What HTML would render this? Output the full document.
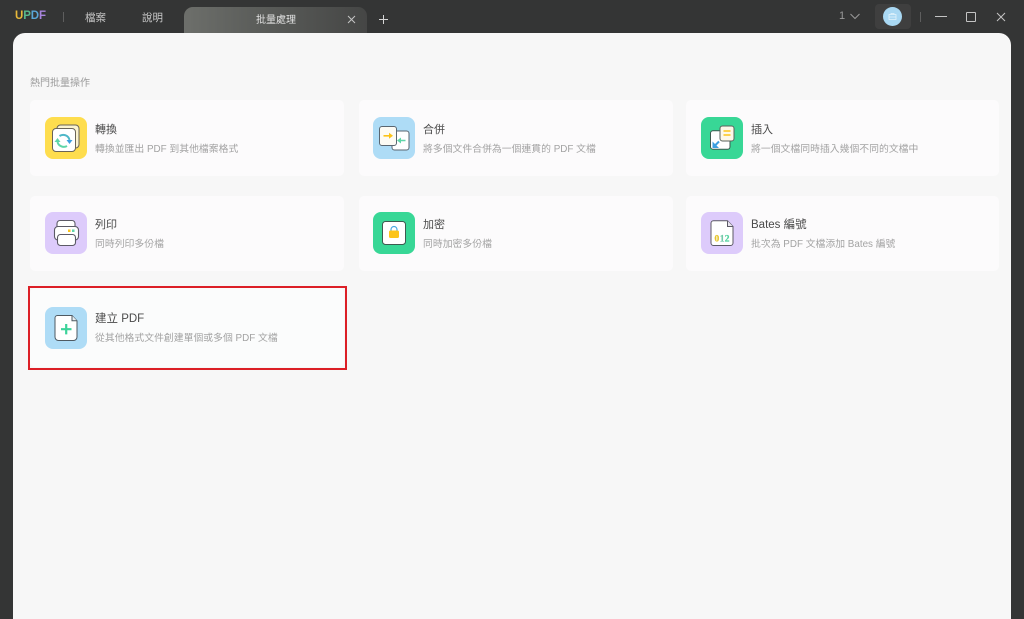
<!DOCTYPE html>
<html lang="zh-Hant">
<head>
<meta charset="utf-8">
<title>UPDF</title>
<style>
html,body{margin:0;padding:0;width:1024px;height:619px;overflow:hidden;background:#343535;}
body{position:relative;font-family:"Liberation Sans","Noto Sans CJK TC",sans-serif;}
#w{position:absolute;left:0;top:0;width:1024px;height:619px;overflow:hidden;background:#343535;filter:blur(.35px);}
.a{position:absolute;white-space:nowrap;}
.panel{position:absolute;left:13px;top:33px;width:998px;height:590px;background:#f7f7f7;border-radius:12px 12px 0 0;}
.tab{position:absolute;left:184px;top:7px;width:183px;height:28px;border-radius:9px 9px 0 0;background:linear-gradient(90deg,#6d6f6b 0%,#5d5f5c 35%,#454645 100%);}
.card{position:absolute;width:314px;height:76px;background:#fcfbfc;border-radius:5px;}
.ic{position:absolute;width:42px;height:42px;border-radius:8px;overflow:hidden;}
.ic svg{display:block;}
.t{position:absolute;font-size:11px;line-height:14px;color:#4a4a4a;white-space:nowrap;}
.s{position:absolute;font-size:9.85px;line-height:14px;color:#a3a3a3;white-space:nowrap;}
.red{position:absolute;left:28px;top:286px;width:315px;height:80px;border:2px solid #dc1f26;}
</style>
</head>
<body>
<div id="w">
<div class="a" style="left:15px;top:9px;font-size:11.5px;line-height:15px;font-weight:bold;letter-spacing:-.1px;"><span style="color:#e8b93a">U</span><span style="color:#58b88c">P</span><span style="color:#5aa5d8">D</span><span style="color:#a884dc">F</span></div>
<div class="a" style="left:63px;top:12px;width:1px;height:10px;background:#5e5e5e;"></div>
<div class="a" style="left:85px;top:11px;font-size:10.5px;line-height:15px;color:#c9c9c9;">檔案</div>
<div class="a" style="left:142px;top:11px;font-size:10.5px;line-height:15px;color:#c9c9c9;">說明</div>
<div class="tab"></div>
<div class="a" style="left:256px;top:13px;font-size:10px;line-height:15px;color:#e2e2e2;">批量處理</div>
<svg class="a" style="left:347px;top:15px" width="9" height="9" viewBox="0 0 9 9"><path d="M1 1L8 8M8 1L1 8" stroke="#c4c4c4" stroke-width="1" fill="none"/></svg>
<svg class="a" style="left:378px;top:14px" width="11" height="11" viewBox="0 0 11 11"><path d="M5.500 1V10M1 5.500H10" stroke="#d6d6d6" stroke-width="1" fill="none"/></svg>

<div class="a" style="left:839px;top:9px;font-size:11px;line-height:15px;color:#9a9a9a;">1</div>
<svg class="a" style="left:850px;top:13px" width="10" height="7" viewBox="0 0 10 7"><path d="M.5 1L5 5.500L9.500 1" stroke="#9a9a9a" stroke-width="1" fill="none"/></svg>
<div class="a" style="left:875px;top:4px;width:36px;height:25px;background:#3f3f3f;border-radius:4px;"></div>
<div class="a" style="left:883px;top:7px;width:19px;height:19px;border-radius:50%;background:#a9d8f3;"></div>
<svg class="a" style="left:888px;top:12px" width="9" height="9" viewBox="0 0 9 9"><path d="M1 2.500H8V7.500H1ZM1 5H8M3 2.500V1.500H6V2.500" stroke="#e3f3fc" stroke-width=".8" fill="none"/></svg>
<div class="a" style="left:920px;top:12px;width:1px;height:10px;background:#5e5e5e;"></div>
<div class="a" style="left:935px;top:16px;width:12px;height:1px;background:#c4c4c4;"></div>
<div class="a" style="left:966px;top:12px;width:8px;height:8px;border:1px solid #c4c4c4;border-radius:1px;"></div>
<svg class="a" style="left:996px;top:12px" width="10" height="10" viewBox="0 0 10 10"><path d="M1 1L9 9M9 1L1 9" stroke="#c4c4c4" stroke-width="1" fill="none"/></svg>

<div class="panel"></div>
<div class="a" style="left:30px;top:77px;font-size:10px;line-height:14px;color:#9a9a9a;">熱門批量操作</div>

<div class="card" style="left:30px;top:100px;"></div>
<div class="card" style="left:359px;top:100px;"></div>
<div class="card" style="left:686px;top:100px;width:313px;"></div>
<div class="card" style="left:30px;top:196px;height:75px;"></div>
<div class="card" style="left:359px;top:196px;height:75px;"></div>
<div class="card" style="left:686px;top:196px;width:313px;height:75px;"></div>
<div class="card" style="left:30px;top:288px;height:79px;background:#fbfcfc;"></div>
<div class="red"></div>

<!-- 轉換 -->
<div class="ic" style="left:45px;top:117px;background:#fedd4e;">
<svg width="42" height="42" viewBox="0 0 42 42">
<rect x="12" y="8" width="22" height="23" rx="3.500" fill="#fbf3cf" stroke="#6a6458" stroke-width="1"/>
<rect x="7.500" y="11.500" width="23" height="23" rx="3.500" fill="#fff" stroke="#6a6458" stroke-width="1"/>
<path d="M14.500 19A6.500 6.500 0 0 1 24.500 23" stroke="#4fb8c8" stroke-width="2" fill="none"/>
<path d="M21.500 23H27.500L24.500 27z" fill="#3d9fe0"/>
<path d="M22 29A6.500 6.500 0 0 1 12.500 25" stroke="#5fd6a8" stroke-width="2" fill="none"/>
<path d="M9.500 25H15.500L12.500 21z" fill="#5fd6a8"/>
</svg></div>
<div class="t" style="left:95px;top:123px;">轉換</div>
<div class="s" style="left:95px;top:143px;">轉換並匯出 PDF 到其他檔案格式</div>

<!-- 合併 -->
<div class="ic" style="left:373px;top:117px;background:#aedcf6;">
<svg width="42" height="42" viewBox="0 0 42 42">
<rect x="19" y="14" width="17" height="19" rx="2.500" fill="#fff" stroke="#5a6670" stroke-width="1"/>
<rect x="6.500" y="9.500" width="17" height="19" rx="2.500" fill="#fdfbf4" stroke="#5a6670" stroke-width="1"/>
<path d="M10.500 18.800H17" stroke="#fcc419" stroke-width="1.600" fill="none"/>
<path d="M16 15.800L20 18.800L16 21.800z" fill="#fcc419"/>
<path d="M27 23.500H32.500" stroke="#5fd6a8" stroke-width="1.600" fill="none"/>
<path d="M28 20.500L24 23.500L28 26.500z" fill="#5fd6a8"/>
</svg></div>
<div class="t" style="left:423px;top:123px;">合併</div>
<div class="s" style="left:423px;top:143px;">將多個文件合併為一個連貫的 PDF 文檔</div>

<!-- 插入 -->
<div class="ic" style="left:701px;top:117px;background:#38d796;">
<svg width="42" height="42" viewBox="0 0 42 42">
<rect x="9.500" y="13.800" width="19.500" height="18.500" rx="2.500" fill="#fff" stroke="#3e5a50" stroke-width="1"/>
<rect x="19" y="9" width="14" height="15" rx="2.500" fill="#fdf8e8" stroke="#5a625c" stroke-width="1"/>
<path d="M22.500 14H29.500M22.500 18H29.500" stroke="#fcc419" stroke-width="1.400" fill="none"/>
<path d="M18 24.500L14 28.500" stroke="#3d9fe0" stroke-width="2" fill="none"/>
<path d="M11.500 24.500V31H18z" fill="#3d9fe0"/>
</svg></div>
<div class="t" style="left:751px;top:123px;">插入</div>
<div class="s" style="left:751px;top:143px;">將一個文檔同時插入幾個不同的文檔中</div>

<!-- 列印 -->
<div class="ic" style="left:45px;top:212px;background:#ddcbfb;">
<svg width="42" height="42" viewBox="0 0 42 42">
<path d="M12 15V11.500a3 3 0 0 1 3-3H27a3 3 0 0 1 3 3V15" fill="#fff" stroke="#5c5a66" stroke-width="1.100"/>
<rect x="9.500" y="14.500" width="24" height="13.500" rx="3.500" fill="#fff" stroke="#5c5a66" stroke-width="1.100"/>
<rect x="12.500" y="22.500" width="18" height="11" rx="3" fill="#fff" stroke="#5c5a66" stroke-width="1.100"/>
<rect x="23" y="17.500" width="2.500" height="2.500" fill="#fcc419"/>
<rect x="27" y="17.500" width="2.500" height="2.500" fill="#5fd6a8"/>
</svg></div>
<div class="t" style="left:95px;top:218px;">列印</div>
<div class="s" style="left:95px;top:238px;">同時列印多份檔</div>

<!-- 加密 -->
<div class="ic" style="left:373px;top:212px;background:#38d796;">
<svg width="42" height="42" viewBox="0 0 42 42">
<rect x="9.500" y="9.500" width="23" height="23" rx="3" fill="#fff" stroke="#3e5a50" stroke-width="1"/>
<path d="M18 19v-1.500a3 3 0 0 1 6 0V19" fill="none" stroke="#4aa8e0" stroke-width="1.200"/>
<rect x="16" y="18.500" width="10" height="7.500" rx="1.500" fill="#fcc419"/>
</svg></div>
<div class="t" style="left:423px;top:218px;">加密</div>
<div class="s" style="left:423px;top:238px;">同時加密多份檔</div>

<!-- Bates -->
<div class="ic" style="left:701px;top:212px;background:#ddcbfb;">
<svg width="42" height="42" viewBox="0 0 42 42">
<path d="M12.500 8.800H26.500L32 14.500V31a2.500 2.500 0 0 1-2.500 2.500H12.500a2.500 2.500 0 0 1-2.500-2.500V11.300a2.500 2.500 0 0 1 2.500-2.500z" fill="#fff" stroke="#5c5a66" stroke-width="1"/>
<path d="M26.500 8.800V14.500H32" fill="#e8e4ee" stroke="#5c5a66" stroke-width="1"/>
<text x="13.500" y="29.500" font-family="'Liberation Serif',serif" font-size="9.500" font-weight="bold" fill="#e6c52c" stroke="#e6c52c" stroke-width=".25">0</text>
<text x="18.700" y="29.500" font-family="'Liberation Serif',serif" font-size="9.500" font-weight="bold" fill="#6fc8a8" stroke="#6fc8a8" stroke-width=".25">1</text>
<text x="23.800" y="29.500" font-family="'Liberation Serif',serif" font-size="9.500" font-weight="bold" fill="#4fd29d" stroke="#4fd29d" stroke-width=".25">2</text>
</svg></div>
<div class="t" style="left:751px;top:218px;font-size:11.500px;">Bates 編號</div>
<div class="s" style="left:751px;top:238px;">批次為 PDF 文檔添加 Bates 編號</div>

<!-- 建立 PDF -->
<div class="ic" style="left:45px;top:307px;background:#aedcf6;">
<svg width="42" height="42" viewBox="0 0 42 42">
<path d="M12.500 8.500H27L32 13.800V30a3.500 3.500 0 0 1-3.500 3.500H13.500a3.500 3.500 0 0 1-3.500-3.500V11a2.500 2.500 0 0 1 2.500-2.500z" fill="#fff" stroke="#4f5a62" stroke-width="1"/>
<path d="M27 8.500V13.800H32" fill="#e6eef2" stroke="#4f5a62" stroke-width="1"/>
<path d="M21.200 17V27.400M16 22.200H26.500" stroke="#3cd39a" stroke-width="2.200" fill="none"/>
</svg></div>
<div class="t" style="left:95px;top:312px;font-size:11.500px;">建立 PDF</div>
<div class="s" style="left:95px;top:332px;">從其他格式文件創建單個或多個 PDF 文檔</div>
</div>
</body>
</html>
